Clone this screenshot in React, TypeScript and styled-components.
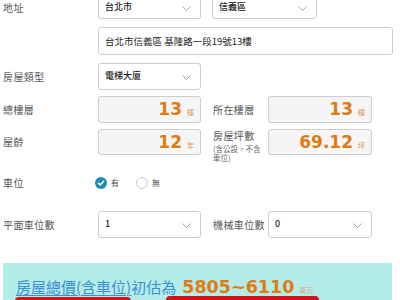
import React from "react";
import styled, { createGlobalStyle } from "styled-components";

const GlobalStyle = createGlobalStyle`
  html, body { margin: 0; padding: 0; background: #fff; }
  body {
    width: 400px;
    height: 300px;
    overflow: hidden;
    font-family: "Noto Sans CJK TC", "Noto Sans", sans-serif;
  }
`;

const Page = styled.div`
  margin-top: -4px;
  padding-left: 3px;
  box-sizing: border-box;
`;

const Row = styled.div<{ $mt?: number; $top?: boolean }>`
  display: flex;
  align-items: ${(p) => (p.$top ? "flex-start" : "center")};
  margin-top: ${(p) => p.$mt ?? 0}px;
`;

const Label = styled.div<{ $lh?: number }>`
  width: 95px;
  flex-shrink: 0;
  font-size: 10px;
  letter-spacing: 0.4px;
  color: #555;
  line-height: ${(p) => (p.$lh ? `${p.$lh}px` : "normal")};
`;

const SideLabel = styled.div<{ $top?: boolean }>`
  width: 55px;
  flex-shrink: 0;
  margin-left: 12px;
  font-size: 10px;
  letter-spacing: 0.4px;
  color: #555;
  line-height: 12px;
  padding-top: ${(p) => (p.$top ? 1 : 0)}px;
`;

const Note = styled.div`
  width: 50px;
  margin-top: 2px;
  font-size: 7.5px;
  line-height: 9px;
  letter-spacing: 0;
  color: #666;
`;

const Select = styled.div<{ $w: number; $h: number; $ml?: number }>`
  box-sizing: border-box;
  width: ${(p) => p.$w}px;
  height: ${(p) => p.$h}px;
  margin-left: ${(p) => p.$ml ?? 0}px;
  border: 1px solid #ccc;
  border-radius: 3px;
  background: #fff;
  display: flex;
  align-items: center;
  justify-content: space-between;
  padding: 0 9px 2px 6px;
  font-size: 9px;
  font-weight: 500;
  color: #222;
`;

const Chevron = styled.svg`
  margin-top: 3px;
  flex-shrink: 0;
`;

const TextInput = styled.div<{ $w: number }>`
  box-sizing: border-box;
  width: ${(p) => p.$w}px;
  height: 28px;
  border: 1px solid #ccc;
  border-radius: 3px;
  background: #fff;
  display: flex;
  align-items: center;
  padding: 0 6px 1px;
  font-size: 9.5px;
  color: #222;
`;

const ValueBox = styled.div<{ $w: number; $h: number }>`
  box-sizing: border-box;
  width: ${(p) => p.$w}px;
  height: ${(p) => p.$h}px;
  border: 1px solid #ccc;
  border-radius: 3px;
  background: #f5f5f5;
  display: flex;
  align-items: center;
  justify-content: flex-end;
  padding-right: 6px;
  flex-shrink: 0;
`;

const ValueLine = styled.div`
  display: flex;
  align-items: baseline;
`;

const BigNum = styled.span`
  font-family: "DejaVu Sans", Verdana, sans-serif;
  font-weight: bold;
  font-size: 17px;
  line-height: 1;
  color: #e07b12;
`;

const Unit = styled.span`
  font-size: 7px;
  margin-left: 5px;
  color: #e39446;
`;

const Radios = styled.div`
  display: flex;
  align-items: center;
  margin-left: -3px;
`;

const RadioOption = styled.div<{ $ml?: number }>`
  display: flex;
  align-items: center;
  gap: 4px;
  margin-left: ${(p) => p.$ml ?? 0}px;
  font-size: 8px;
  color: #444;
`;

const RadioCircle = styled.span`
  box-sizing: border-box;
  width: 12px;
  height: 12px;
  border: 1px solid #c8c8c8;
  border-radius: 50%;
  background: #fff;
`;

const ResultBox = styled.div`
  margin-top: 25px;
  margin-right: 8px;
  background: #b4ece9;
  padding: 14px 13px 20px;
`;

const ResultLine = styled.div`
  display: flex;
  align-items: baseline;
  line-height: 20px;
`;

const Marked = styled.span<{ $l: number; $r: number; $dy: number }>`
  position: relative;
  display: inline-flex;
  align-items: baseline;
  &::after {
    content: "";
    position: absolute;
    left: ${(p) => p.$l}px;
    right: ${(p) => p.$r}px;
    top: calc(100% + ${(p) => p.$dy}px);
    height: 8px;
    border-radius: 4px;
    background: #d3121b;
  }
`;

const BlueText = styled.span<{ $u?: boolean }>`
  font-size: 15px;
  color: #3b8fd3;
  text-decoration: ${(p) => (p.$u ? "underline" : "none")};
  text-decoration-thickness: 1px;
  text-underline-offset: 2px;
`;

const ResultNum = styled.span`
  font-family: "DejaVu Sans", Verdana, sans-serif;
  font-weight: bold;
  font-size: 17.5px;
  color: #e07b12;
`;

const ResultUnit = styled.span`
  font-size: 7px;
  margin-left: 5px;
  color: #dca77a;
`;

const ChevronIcon = () => (
  <Chevron width="9" height="5" viewBox="0 0 9 5">
    <polyline points="0.5,0.5 4.5,4.5 8.5,0.5" fill="none" stroke="#9a9a9a" strokeWidth="0.9" />
  </Chevron>
);

const SelectBox = ({ w, h = 27, ml, value }: { w: number; h?: number; ml?: number; value: string }) => (
  <Select $w={w} $h={h} $ml={ml}>
    <span>{value}</span>
    <ChevronIcon />
  </Select>
);

const Value = ({ w, h, num, unit }: { w: number; h: number; num: string; unit: string }) => (
  <ValueBox $w={w} $h={h}>
    <ValueLine>
      <BigNum>{num}</BigNum>
      <Unit>{unit}</Unit>
    </ValueLine>
  </ValueBox>
);

export default function App() {
  return (
    <>
      <GlobalStyle />
      <Page>
        <Row>
          <Label>地址</Label>
          <SelectBox w={103} h={23} value="台北市" />
          <SelectBox w={105} h={23} ml={11} value="信義區" />
        </Row>
        <Row $mt={8}>
          <Label />
          <TextInput $w={295}>台北市信義區 基隆路一段19號13樓</TextInput>
        </Row>
        <Row $mt={8}>
          <Label>房屋類型</Label>
          <SelectBox w={103} value="電梯大廈" />
        </Row>
        <Row $mt={6}>
          <Label>總樓層</Label>
          <Value w={103} h={27} num="13" unit="樓" />
          <SideLabel>所在樓層</SideLabel>
          <Value w={104} h={27} num="13" unit="樓" />
        </Row>
        <Row $mt={6} $top>
          <Label $lh={26}>屋齡</Label>
          <Value w={103} h={26} num="12" unit="年" />
          <SideLabel $top>
            房屋坪數
            <Note>(含公設，不含車位)</Note>
          </SideLabel>
          <Value w={104} h={26} num="69.12" unit="坪" />
        </Row>
        <Row $mt={13}>
          <Label>車位</Label>
          <Radios>
            <RadioOption>
              <svg width="12" height="12" viewBox="0 0 12 12">
                <circle cx="6" cy="6" r="6" fill="#1b8db3" />
                <path d="M3.4 6.2 L5.2 7.9 L8.6 4.3" fill="none" stroke="#fff" strokeWidth="1.5" strokeLinecap="round" strokeLinejoin="round" />
              </svg>
              <span>有</span>
            </RadioOption>
            <RadioOption $ml={17}>
              <RadioCircle />
              <span>無</span>
            </RadioOption>
          </Radios>
        </Row>
        <Row $mt={21}>
          <Label>平面車位數</Label>
          <SelectBox w={103} value="1" />
          <SideLabel>機械車位數</SideLabel>
          <SelectBox w={104} value="0" />
        </Row>
        <ResultBox>
          <ResultLine>
            <Marked $l={-1} $r={0} $dy={0}>
              <BlueText $u>房屋總價(含車位)</BlueText>
            </Marked>
            <BlueText>初估為</BlueText>
            <Marked $l={-10} $r={-6} $dy={-4}>
              <ResultNum>&nbsp;5805~6110</ResultNum>
              <ResultUnit>萬元</ResultUnit>
            </Marked>
          </ResultLine>
        </ResultBox>
      </Page>
    </>
  );
}
